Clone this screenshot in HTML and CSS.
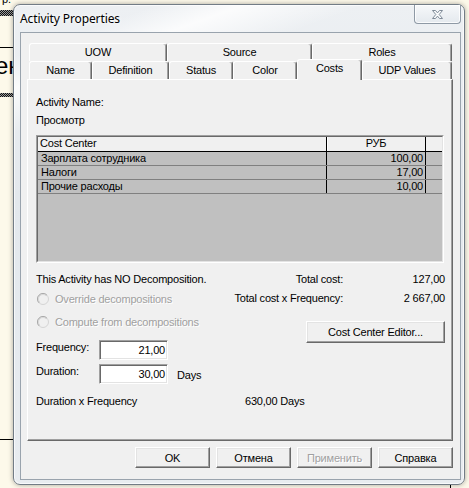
FILE: index.html
```html
<!DOCTYPE html>
<html>
<head>
<meta charset="utf-8">
<title>Activity Properties</title>
<link rel="stylesheet" href="styles.css">
</head>
<body>
<div class="desk-p">р.</div>
<div class="desk-dither d1"></div>
<div class="desk-hline h1"></div>
<div class="desk-word">ен</div>
<div class="desk-dither d2"></div>
<div class="desk-hline h2"></div>
<div class="desk-vline"></div>

<div class="window">
  <div class="titlebar">
    <span class="title">Activity Properties</span>
    <div class="close">
      <svg width="13" height="11" viewBox="0 0 13 11"><path d="M1.5 1.5h3l2 2.4 2-2.4h3l-3.3 4 3.3 4h-3l-2-2.4-2 2.4h-3l3.3-4z" fill="#fbfcfd" stroke="#7f8b98" stroke-linejoin="round"/></svg>
    </div>
  </div>
  <div class="client">
    <div class="tabs">
      <div class="tab-row">
        <div class="tab t-uow">UOW</div>
        <div class="tab t-source">Source</div>
        <div class="tab t-roles">Roles</div>
      </div>
      <div class="tab-row">
        <div class="tab t-name">Name</div>
        <div class="tab t-def">Definition</div>
        <div class="tab t-status">Status</div>
        <div class="tab t-color">Color</div>
        <div class="tab t-costs sel">Costs</div>
        <div class="tab t-udp">UDP Values</div>
      </div>
    </div>
    <div class="panel">
      <div class="line">Activity Name:</div>
      <div class="line name-value">Просмотр</div>
      <div class="list">
        <div class="list-inner">
          <div class="lrow head"><div class="c1">Cost Center</div><div class="c2">РУБ</div><div class="c3"></div></div>
          <div class="lrow"><div class="c1">Зарплата сотрудника</div><div class="c2">100,00</div><div class="c3"></div></div>
          <div class="lrow"><div class="c1">Налоги</div><div class="c2">17,00</div><div class="c3"></div></div>
          <div class="lrow"><div class="c1">Прочие расходы</div><div class="c2">10,00</div><div class="c3"></div></div>
        </div>
      </div>
      <div class="lower">
        <div class="col-left">
          <div class="line">This Activity has NO Decomposition.</div>
          <div class="radio-row first">
            <svg class="radio" width="12" height="12" viewBox="0 0 12 12"><circle cx="6" cy="6" r="5.5" fill="#f0f0f0" stroke="#d4d4d4"/><path d="M2.1 9.9A5.5 5.5 0 0 1 9.9 2.1" fill="none" stroke="#a8a8a8"/><path d="M2.8 9.2A4.5 4.5 0 0 1 9.2 2.8" fill="none" stroke="#d8d8d8"/></svg>
            <span class="disabled">Override decompositions</span>
          </div>
          <div class="radio-row second">
            <svg class="radio" width="12" height="12" viewBox="0 0 12 12"><circle cx="6" cy="6" r="5.5" fill="#f0f0f0" stroke="#d4d4d4"/><path d="M2.1 9.9A5.5 5.5 0 0 1 9.9 2.1" fill="none" stroke="#a8a8a8"/><path d="M2.8 9.2A4.5 4.5 0 0 1 9.2 2.8" fill="none" stroke="#d8d8d8"/></svg>
            <span class="disabled">Compute from decompositions</span>
          </div>
          <div class="field-row freq">
            <span class="field-label">Frequency:</span>
            <div class="field">21,00</div>
          </div>
          <div class="field-row dur">
            <span class="field-label">Duration:</span>
            <div class="field">30,00</div>
            <span class="unit">Days</span>
          </div>
        </div>
        <div class="col-right">
          <div class="tot"><span>Total cost:</span><span>127,00</span></div>
          <div class="tot second"><span>Total cost x Frequency:</span><span>2 667,00</span></div>
          <button class="btn btn-editor">Cost Center Editor...</button>
        </div>
      </div>
      <div class="dxf"><span class="dxf-label">Duration x Frequency</span><span>630,00 Days</span></div>
    </div>
    <div class="buttons">
      <button class="btn">OK</button>
      <button class="btn">Отмена</button>
      <button class="btn disabled-btn">Применить</button>
      <button class="btn">Справка</button>
    </div>
  </div>
</div>
</body>
</html>
```
FILE: styles.css
```css
html, body {
  margin: 0;
  padding: 0;
}
body {
  width: 469px;
  height: 488px;
  overflow: hidden;
  position: relative;
  background: #fdf9ea;
  font-family: "Liberation Sans", Arial, sans-serif;
  font-size: 11px;
  letter-spacing: -0.2px;
  color: #000;
}

/* desktop content behind the dialog */
.desk-p {
  position: absolute;
  left: 2px;
  top: -7px;
  font-size: 11px;
}
.desk-dither {
  position: absolute;
  left: 0;
  width: 14px;
  background: repeating-conic-gradient(#111 0 25%, #9a9a9a 0 50%) 0 0 / 2px 2px;
}
.desk-dither.d1 { top: 10px; height: 6px; }
.desk-dither.d2 { top: 93px; height: 4px; }
.desk-hline {
  position: absolute;
  left: 0;
  width: 14px;
  height: 1px;
  background: #000;
}
.desk-hline.h1 { top: 47px; }
.desk-hline.h2 { top: 439px; }
.desk-vline {
  position: absolute;
  left: 450px;
  top: 484px;
  width: 1px;
  height: 4px;
  background: #000;
}
.desk-word {
  position: absolute;
  left: -5px;
  top: 52px;
  font-size: 24px;
  letter-spacing: 0;
}

/* window */
.window {
  position: absolute;
  left: 13px;
  top: 4px;
  width: 452px;
  height: 481px;
  box-sizing: border-box;
  border: 1px solid #727c86;
  border-radius: 7px;
  padding: 0 3px 4px 6px;
  display: flex;
  flex-direction: column;
  background:
    linear-gradient(160deg, rgba(255,255,255,0) 8%, rgba(255,255,255,.8) 13%, rgba(255,255,255,0) 20%),
    linear-gradient(#edf0f3, #e3e8ed 40%, #e8ecf0);
  box-shadow: 0 0 5px rgba(0,0,0,.35), inset 0 0 0 1px rgba(255,255,255,.7);
}
.titlebar {
  height: 27px;
  display: flex;
  justify-content: space-between;
  align-items: flex-start;
  flex-shrink: 0;
}
.title {
  margin-top: 6px;
  font-family: "Noto Sans", "Open Sans", sans-serif;
  font-size: 12px;
  line-height: 16px;
  letter-spacing: -0.1px;
  color: #000;
  text-shadow: 0 0 6px #fff, 0 0 3px #fff;
}
.close {
  width: 47px;
  height: 19px;
  box-sizing: border-box;
  border: 1px solid #8e99a5;
  border-top: none;
  border-radius: 0 0 4px 4px;
  background: linear-gradient(#f6f8fa, #e4e9ee);
  box-shadow: inset 0 0 0 1px rgba(255,255,255,.8);
  display: flex;
  align-items: center;
  justify-content: center;
}

.client {
  flex: 1;
  background: #f0f0f0;
  box-shadow: inset 0 0 0 1px #99a3ad;
  padding: 11px 8px 0 7px;
}

/* tabs */
.tabs {
  height: 36px;
}
.tab-row {
  display: flex;
  height: 18px;
  padding-left: 2px;
}
.tab {
  box-sizing: border-box;
  height: 18px;
  border-top: 1px solid #fff;
  border-left: 1px solid #fff;
  border-right: 1px solid #696969;
  box-shadow: inset -1px 0 #a0a0a0;
  border-radius: 3px 3px 0 0;
  background: #f0f0f0;
  text-align: center;
  line-height: 16px;
  white-space: nowrap;
}
.t-uow { width: 138px; }
.t-source { width: 145px; }
.t-roles { width: 140px; }
.t-name { width: 63px; }
.t-def { width: 77px; }
.t-status { width: 64px; }
.t-color { width: 64px; }
.t-costs { width: 65px; }
.t-udp { width: 90px; }
.tab.sel {
  position: relative;
  z-index: 1;
  height: 21px;
  margin-top: -2px;
}

/* tab page */
.panel {
  box-sizing: border-box;
  height: 362px;
  border: 1px solid;
  border-color: #fff #696969 #696969 #fff;
  box-shadow: inset -1px -1px #a0a0a0;
  padding: 16px 8px 0;
}
.line {
  height: 13px;
  line-height: 13px;
  white-space: nowrap;
}
.name-value {
  margin-top: 5px;
}

/* list view */
.list {
  margin-top: 8px;
  height: 128px;
  box-sizing: border-box;
  border: 1px solid;
  border-color: #a0a0a0 #fff #fff #a0a0a0;
}
.list-inner {
  height: 100%;
  box-sizing: border-box;
  border: 1px solid;
  border-color: #696969 #e3e3e3 #e3e3e3 #696969;
  background: #c0c0c0;
}
.lrow {
  display: grid;
  grid-template-columns: 289px 99px 1fr;
  height: 14px;
  box-sizing: border-box;
  border-bottom: 1px solid #808080;
  line-height: 13px;
  white-space: nowrap;
}
.lrow .c1,
.lrow .c2 {
  box-sizing: border-box;
  border-right: 1px solid #000;
}
.lrow .c1 {
  padding-left: 3px;
}
.lrow .c2 {
  text-align: right;
  padding-right: 2px;
}
.lrow.head {
  height: 15px;
  border-bottom-color: #000;
  background: #f0f0f0;
}
.lrow.head .c1 {
  padding-left: 2px;
}
.lrow.head .c2 {
  text-align: center;
  padding-right: 0;
  box-shadow: inset 1px 0 #fff;
}

/* lower section */
.lower {
  display: flex;
  justify-content: space-between;
  margin-top: 10px;
  margin-right: -1px;
}
.radio-row {
  display: flex;
  align-items: center;
  height: 14px;
  white-space: nowrap;
}
.radio-row.first { margin-top: 6px; }
.radio-row.second { margin-top: 9px; }
.radio {
  margin-left: 1px;
  margin-right: 6px;
  flex-shrink: 0;
}
.disabled {
  color: #a0a0a0;
  text-shadow: 1px 1px 0 #fff;
}
.field-row {
  display: flex;
  align-items: flex-start;
}
.field-row.freq { margin-top: 11px; }
.field-row.dur { margin-top: 4px; }
.field-label {
  width: 63px;
  line-height: 13px;
  margin-top: 1px;
}
.field {
  width: 69px;
  height: 20px;
  box-sizing: border-box;
  border: 1px solid;
  border-color: #a0a0a0 #fff #fff #a0a0a0;
  box-shadow: inset 1px 1px #696969, inset -1px -1px #e3e3e3;
  background: #fff;
  text-align: right;
  padding-right: 2px;
  line-height: 18px;
}
.unit {
  margin-left: 9px;
  margin-top: 5px;
  line-height: 13px;
}
.col-right {
  width: 212px;
}
.tot {
  display: grid;
  grid-template-columns: 110px 102px;
  line-height: 13px;
  height: 13px;
  text-align: right;
  white-space: nowrap;
}
.tot.second {
  margin-top: 6px;
}
.dxf {
  display: flex;
  margin-top: 11px;
  line-height: 13px;
  white-space: nowrap;
}
.dxf-label {
  width: 209px;
}

/* buttons */
.btn {
  box-sizing: border-box;
  width: 75px;
  height: 21px;
  padding: 0;
  font-family: inherit;
  font-size: 11px;
  letter-spacing: -0.2px;
  color: #000;
  background: #f0f0f0;
  border: 1px solid;
  border-color: #fff #696969 #696969 #fff;
  box-shadow: inset -1px -1px #a0a0a0, inset 1px 1px #e3e3e3;
  border-radius: 0;
}
.btn-editor {
  display: block;
  width: 139px;
  height: 22px;
  margin-left: 73px;
  margin-top: 16px;
}
.disabled-btn {
  color: #a0a0a0;
  text-shadow: 1px 1px 0 #fff;
}
.buttons {
  display: flex;
  justify-content: flex-end;
  gap: 6px;
  margin-top: 6px;
}
```
